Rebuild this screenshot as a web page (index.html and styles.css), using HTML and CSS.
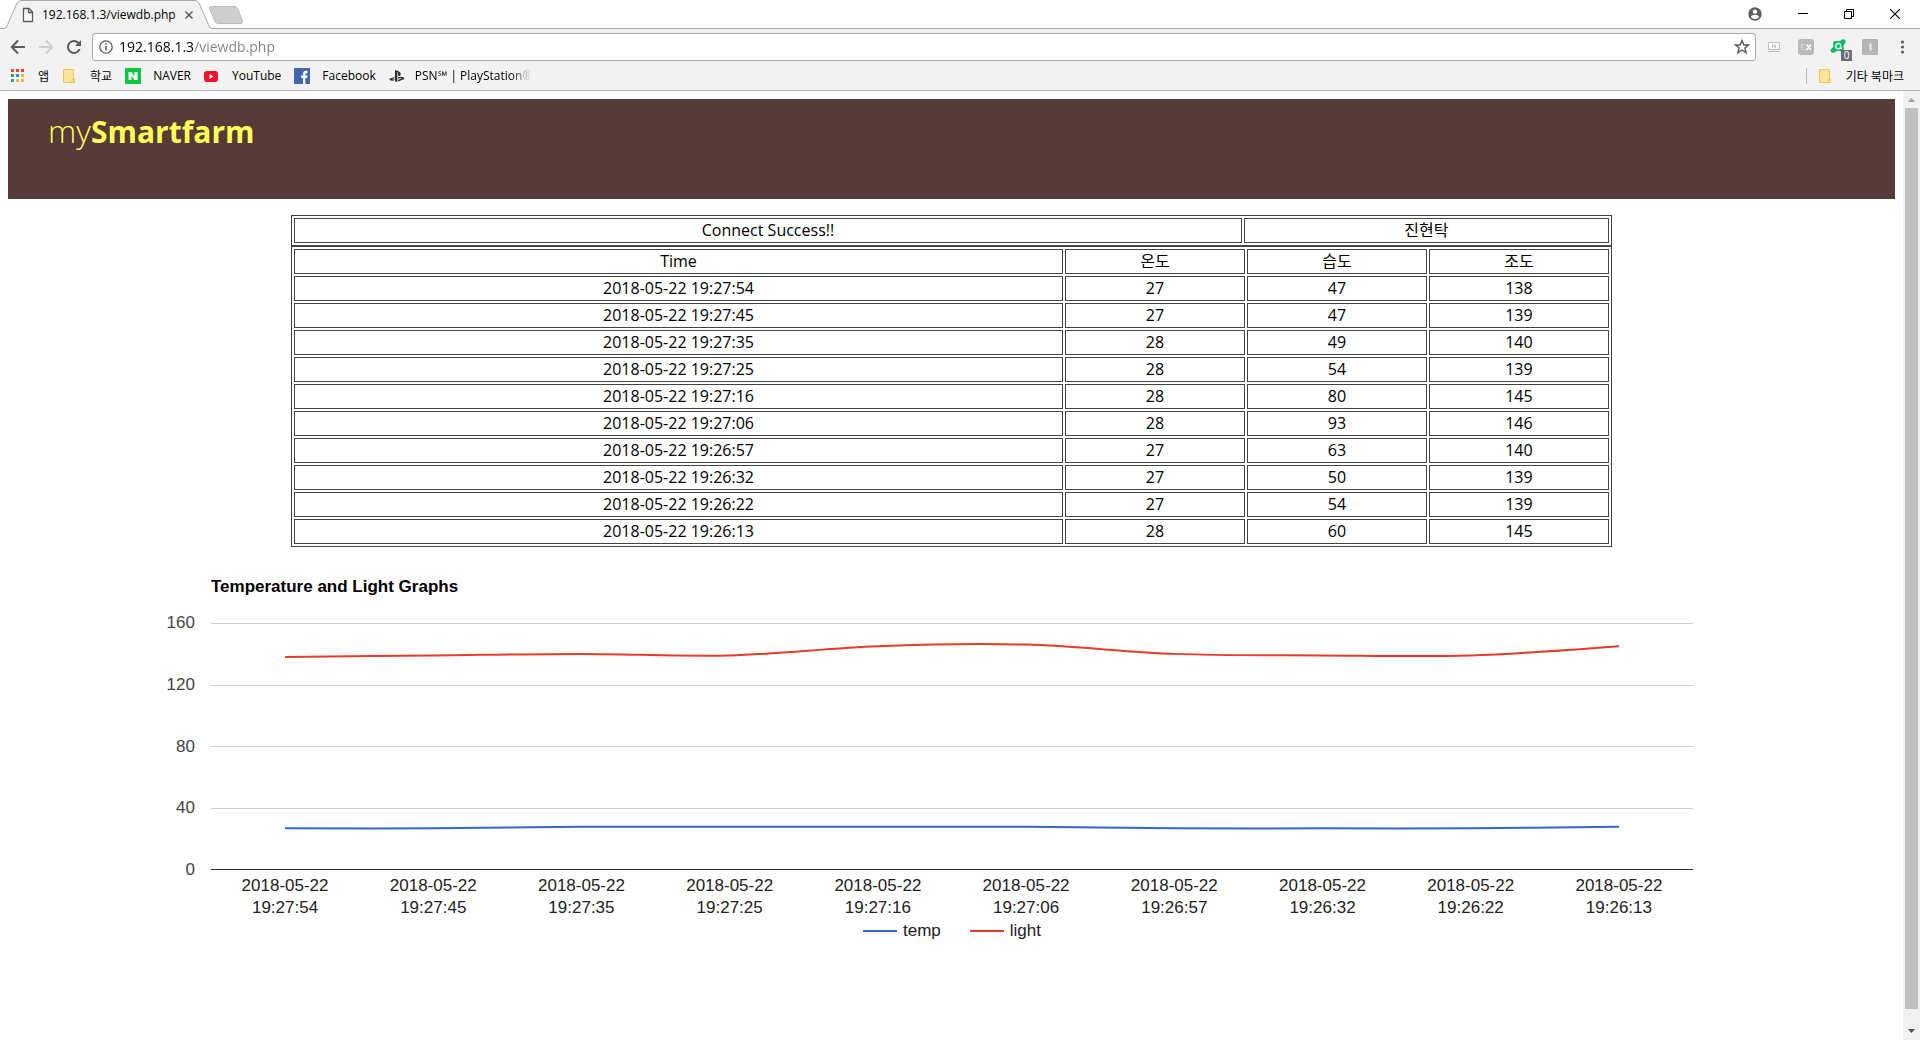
FILE: index.html
```html
<!DOCTYPE html>
<html lang="ko">
<head>
<meta charset="utf-8">
<title>192.168.1.3/viewdb.php</title>
<link rel="stylesheet" href="styles.css">
</head>
<body>
<header class="browser">
  <div class="tabstrip">
    <div class="tab">
      <svg class="tab-shape" width="214" height="29" viewBox="0 0 214 29"><path d="M0 28.500H4Q6 28.500 7 26L17 3Q18.500 .5 21 .5H195Q197.500 .5 199 3L209 26Q210 28.500 212 28.500H214V29H0Z" fill="#f2f2f2"/><path d="M0 28.500H4Q6 28.500 7 26L17 3Q18.500 .5 21 .5H195Q197.500 .5 199 3L209 26Q210 28.500 212 28.500H214" fill="none" stroke="#a9a9a9"/></svg>
      <svg class="tab-page" width="12" height="16" viewBox="0 0 12 16"><path d="M1.500 1.500H7L10.500 5V14.500H1.500ZM6.500 1.500V5.500H10.500" fill="#fff" stroke="#5a5a5a" stroke-width="1.300"/></svg>
      <span class="tab-title">192.168.1.3/viewdb.php</span>
      <button class="tab-close" aria-label="탭 닫기"><svg width="10" height="10" viewBox="0 0 10 10"><path d="M1.500 1.500L8.500 8.500M8.500 1.500L1.500 8.500" stroke="#5a5a5a" stroke-width="1.500"/></svg></button>
    </div>
    <button class="newtab" aria-label="새 탭"><svg width="36" height="20" viewBox="0 0 36 20"><path d="M2.500 1.500H26Q28.500 1.500 29.500 3.500L34.500 16Q35 18.500 33 18.500H10Q8 18.500 7 16.500L1.500 3.500Q1 1.500 2.500 1.500Z" fill="#cdcdcd" stroke="#bcbcbc"/></svg></button>
    <div class="window-buttons">
      <button class="profile" aria-label="프로필"><svg width="14" height="14" viewBox="0 0 14 14"><circle cx="7" cy="7" r="6.700" fill="#5f5f5f"/><circle cx="7" cy="4.600" r="2.200" fill="#fff"/><path d="M2.700 9.800Q4 7.800 7 7.800T11.300 9.800Q9.600 12 7 12T2.700 9.800Z" fill="#fff"/></svg></button>
      <button aria-label="최소화"><svg width="10" height="10" viewBox="0 0 10 10"><path d="M0 4.500H10" stroke="#000"/></svg></button>
      <button aria-label="이전 크기로"><svg width="10" height="10" viewBox="0 0 10 10"><path d="M.5 2.500H7.500V9.500H.5ZM2.500 2V.5H9.500V7.500H8" fill="none" stroke="#000"/></svg></button>
      <button aria-label="닫기"><svg width="10" height="10" viewBox="0 0 10 10"><path d="M0 0L10 10M10 0L0 10" stroke="#000" stroke-width="1.100"/></svg></button>
    </div>
  </div>
  <div class="toolbar">
    <nav class="navigation">
      <button aria-label="뒤로"><svg width="16" height="16" viewBox="0 0 16 16"><path d="M15 8H2.500M8 1.500L1.800 8L8 14.500" fill="none" stroke="#5a5a5a" stroke-width="2"/></svg></button>
      <button aria-label="앞으로" disabled><svg width="16" height="16" viewBox="0 0 16 16"><path d="M1 8H13.500M8 1.500L14.200 8L8 14.500" fill="none" stroke="#cfcfcf" stroke-width="2"/></svg></button>
      <button aria-label="새로고침"><svg width="16" height="16" viewBox="0 0 16 16"><path d="M13.600 10A6 6 0 1 1 12.500 4" fill="none" stroke="#5a5a5a" stroke-width="2"/><path d="M15 1V7H9Z" fill="#5a5a5a"/></svg></button>
    </nav>
    <div class="omnibox">
      <svg width="14" height="14" viewBox="0 0 14 14"><circle cx="7" cy="7" r="6.200" fill="none" stroke="#5a5a5a" stroke-width="1.300"/><path d="M7 6V10.500M7 3.200V4.800" stroke="#5a5a5a" stroke-width="1.600"/></svg>
      <input class="address" type="text" aria-label="주소" value="192.168.1.3/viewdb.php">
      <button aria-label="북마크에 추가"><svg width="16" height="16" viewBox="0 0 16 16"><path d="M8 1.600L9.900 6H14.600L10.900 9L12.200 13.900L8 11L3.800 13.900L5.100 9L1.400 6H6.100Z" fill="none" stroke="#5a5a5a" stroke-width="1.400"/></svg></button>
    </div>
    <div class="extensions">
      <button aria-label="확장 프로그램"><svg width="16" height="16" viewBox="0 0 16 16"><path d="M2.500 3.500H13.500V10.500H2.500Z" fill="#f7f7f7" stroke="#c0c0c0"/><path d="M2 12.500H14M6.500 8.500V5.500L9.500 8.500V5.500" fill="none" stroke="#bcbcbc"/></svg></button>
      <button aria-label="EX"><svg width="16" height="16" viewBox="0 0 16 16"><rect width="16" height="16" rx="3" fill="#b9b9b9"/><path d="M3 5.500H7M3 8H6.500M3 10.500H7M3.500 5V11" stroke="#d6d6d6"/><path d="M8.500 5.500L13 11M13 5.500L8.500 11" stroke="#fff" stroke-width="1.600"/></svg></button>
      <button class="avast" aria-label="Avast"><svg width="16" height="16" viewBox="0 0 16 16"><path d="M3 3Q5 1.500 8 2Q10 2.500 12 .5Q15-.5 15.500 2Q16 4 14 5.500Q13 8 14 10Q14 13 11 12.500Q8 11 6 12.500Q3 15 1 13Q-.5 10.500 2.500 9Q4 7 3 3Z" fill="#0dbb62"/><path d="M10.300 5.300A2.700 2.700 0 1 0 10.300 9M10.500 4.700V8.500Q10.700 9.700 12 9" fill="none" stroke="#fff" stroke-width="1.300"/></svg><span class="badge">0</span></button>
      <button aria-label="확장 프로그램 I"><svg width="16" height="16" viewBox="0 0 16 16"><rect width="16" height="16" rx="1" fill="#b5b5b5"/><path d="M8.500 4.500V11.500" stroke="#eee" stroke-width="2"/></svg></button>
      <button aria-label="메뉴"><svg width="16" height="16" viewBox="0 0 16 16"><g fill="#5a5a5a"><circle cx="8.500" cy="3" r="1.600"/><circle cx="8.500" cy="8" r="1.600"/><circle cx="8.500" cy="13" r="1.600"/></g></svg></button>
    </div>
  </div>
  <nav class="bookmarks">
    <a href="#apps"><svg width="16" height="16" viewBox="0 0 16 16"><path d="M1 1h3v3H1zM6 1h3v3H6zM11 1h3v3h-3z" fill="#ea4335"/><path d="M1 6h3v3H1zM1 11h3v3H1z" fill="#34a853"/><path d="M6 6h3v3H6z" fill="#2a8bf2"/><path d="M11 6h3v3h-3zM6 11h3v3H6zM11 11h3v3h-3z" fill="#f9b234"/></svg>앱</a>
    <a href="#school"><svg width="16" height="16" viewBox="0 0 16 16"><path d="M1.500 1.500H11.500V10.500H12.500V14.500H1.500Z" fill="#ffe49b" stroke="#f0c45c"/><path d="M10 14V11.500H12" fill="none" stroke="#f0c45c"/></svg>학교</a>
    <a href="#naver"><svg width="16" height="16" viewBox="0 0 16 16"><rect width="16" height="16" rx="1" fill="#06c93c"/><path d="M3.500 4H6.500L9.500 8.200V4H12.500V12H9.500L6.500 7.800V12H3.500Z" fill="#fff"/></svg>NAVER</a>
    <a href="#youtube"><svg width="16" height="16" viewBox="0 0 16 16"><rect x="0" y="3" width="14" height="11" rx="3" fill="#f11228"/><path d="M5.500 6V11L9.500 8.500Z" fill="#fff"/></svg>YouTube</a>
    <a href="#facebook"><svg width="16" height="16" viewBox="0 0 16 16"><rect width="16" height="16" fill="#4267b2"/><path d="M9 16V10H7V7.500H9V6Q9 2.800 12 2.800H13.500V5.200H12.500Q11.300 5.200 11.300 6.300V7.500H13.500L13.200 10H11.300V16Z" fill="#fff"/></svg>Facebook</a>
    <a class="fade" href="#psn"><svg width="16" height="16" viewBox="0 0 16 16"><path d="M6 2L9 2.900Q12 4 11.700 6.600Q11.300 8.600 9 7.600V4.500L8.300 4V14L6 13.300Z" fill="#2e2a2b"/><path d="M5.400 9L1 10.600Q-.5 12 2 12.600Q3.700 13 5.400 12.300V11L3.500 11.500L3 11L5.400 10.200ZM9 9.200Q12.500 8.300 15 9.700Q16 10.800 14 11.600L9 13.400V11.900L12.700 10.600L12 10.100L9 10.800Z" fill="#2e2a2b"/></svg>PSN℠ | PlayStation®</a>
    <a class="others" href="#others"><svg width="16" height="16" viewBox="0 0 16 16"><path d="M1.500 1.500H11.500V10.500H12.500V14.500H1.500Z" fill="#ffe49b" stroke="#f0c45c"/><path d="M10 14V11.500H12" fill="none" stroke="#f0c45c"/></svg>기타 북마크</a>
  </nav>
</header>
<div class="viewport">
  <main class="page">
    <header class="banner"><h1>my<strong>Smartfarm</strong></h1></header>
    <table class="status">
      <colgroup><col class="col-message"><col></colgroup>
      <tr><td>Connect Success!!</td><td>진현탁</td></tr>
    </table>
    <table class="readings">
      <colgroup><col><col class="col-value"><col class="col-value"><col class="col-value"></colgroup>
      <tr><th>Time</th><th>온도</th><th>습도</th><th>조도</th></tr>
      <tr><td>2018-05-22 19:27:54</td><td>27</td><td>47</td><td>138</td></tr>
      <tr><td>2018-05-22 19:27:45</td><td>27</td><td>47</td><td>139</td></tr>
      <tr><td>2018-05-22 19:27:35</td><td>28</td><td>49</td><td>140</td></tr>
      <tr><td>2018-05-22 19:27:25</td><td>28</td><td>54</td><td>139</td></tr>
      <tr><td>2018-05-22 19:27:16</td><td>28</td><td>80</td><td>145</td></tr>
      <tr><td>2018-05-22 19:27:06</td><td>28</td><td>93</td><td>146</td></tr>
      <tr><td>2018-05-22 19:26:57</td><td>27</td><td>63</td><td>140</td></tr>
      <tr><td>2018-05-22 19:26:32</td><td>27</td><td>50</td><td>139</td></tr>
      <tr><td>2018-05-22 19:26:22</td><td>27</td><td>54</td><td>139</td></tr>
      <tr><td>2018-05-22 19:26:13</td><td>28</td><td>60</td><td>145</td></tr>
    </table>
    <section class="chart">
      <h2>Temperature and Light Graphs</h2>
      <div class="y-axis"><span>160</span><span>120</span><span>80</span><span>40</span><span>0</span></div>
      <div class="plot">
        <i></i><i></i><i></i><i></i><i class="baseline"></i>
        <svg class="series" viewBox="0 0 1000 160" preserveAspectRatio="none">
          <path class="temp" d="M50 133C50 133 117 133.170 150 133S217 132.170 250 132S317 132 350 132S417 132 450 132S517 131.830 550 132S617 132.830 650 133S717 133 750 133S817 133.170 850 133S950 132 950 132"/>
          <path class="light" d="M50 22C50 22 117 21.330 150 21S217 20 250 20S317 21.830 350 21S417 16.170 450 15S517 13.170 550 14S617 18.830 650 20S717 20.830 750 21S817 22 850 21S950 15 950 15"/>
        </svg>
      </div>
      <div class="x-axis">
        <span>2018-05-22<br>19:27:54</span><span>2018-05-22<br>19:27:45</span><span>2018-05-22<br>19:27:35</span><span>2018-05-22<br>19:27:25</span><span>2018-05-22<br>19:27:16</span><span>2018-05-22<br>19:27:06</span><span>2018-05-22<br>19:26:57</span><span>2018-05-22<br>19:26:32</span><span>2018-05-22<br>19:26:22</span><span>2018-05-22<br>19:26:13</span>
      </div>
      <div class="legend"><span class="key key-temp">temp</span><span class="key key-light">light</span></div>
    </section>
  </main>
  <div class="scrollbar">
    <svg width="17" height="17" viewBox="0 0 17 17"><path d="M5 11H12L8.500 7Z" fill="#a3a3a3"/></svg>
    <div class="track"><div class="thumb"></div></div>
    <svg width="17" height="17" viewBox="0 0 17 17"><path d="M5 6H12L8.500 10Z" fill="#505050"/></svg>
  </div>
</div>
</body>
</html>
```
FILE: styles.css
```css
* { box-sizing: border-box; }
body {
  margin: 0;
  min-height: 100vh;
  display: flex;
  flex-direction: column;
  background: #fff;
  color: #000;
  font-family: "Open Sans", "Noto Sans CJK KR", sans-serif;
}
button {
  display: flex;
  align-items: center;
  justify-content: center;
  padding: 0;
  border: 0;
  background: none;
  font: inherit;
}
svg { display: block; flex: none; }

/* browser window frame */
.browser { font-size: 12px; border-bottom: 1px solid #b3b3b3; background: #f2f2f2; }
.tabstrip {
  display: flex;
  height: 29px;
  background: #fff linear-gradient(#a9a9a9, #a9a9a9) bottom / 100% 1px no-repeat;
}
.tab {
  position: relative;
  display: flex;
  align-items: center;
  width: 208px;
  padding: 0 14px 0 22px;
}
.tab-shape { position: absolute; left: 0; top: 0; }
.tab-page, .tab-title, .tab-close { position: relative; }
.tab-title { flex: 1; margin-left: 8px; white-space: nowrap; }
.newtab { height: 29px; }
.window-buttons { display: flex; margin-left: auto; padding-right: 2px; }
.window-buttons button { width: 46px; height: 27px; }
.window-buttons .profile { width: 50px; }

.toolbar { display: flex; align-items: center; height: 36px; padding: 0 10px 0 4px; }
.navigation { display: flex; margin-right: 4px; }
.navigation button { width: 28px; height: 28px; }
.omnibox {
  flex: 1;
  display: flex;
  align-items: center;
  height: 28px;
  padding: 0 5px 0 6px;
  border: 1px solid #a9a9a9;
  border-radius: 3px;
  background: #fff;
}
.address {
  flex: 1;
  min-width: 0;
  height: 24px;
  margin-left: 6px;
  padding: 0;
  border: 0;
  outline: 0;
  font: 14px/24px "Open Sans", sans-serif;
  color: transparent;
  background: linear-gradient(90deg, #000 75px, #808080 75px);
  -webkit-background-clip: text;
  background-clip: text;
}
.extensions { display: flex; gap: 16px; margin-left: 10px; }
.extensions button { width: 16px; height: 16px; }
.avast { position: relative; }
.badge {
  position: absolute;
  left: 11px;
  top: 11px;
  width: 11px;
  height: 11px;
  background: #6c6c7c;
  color: #fff;
  font-size: 10px;
  line-height: 11px;
}
.bookmarks { display: flex; align-items: center; gap: 13px; height: 25px; padding: 0 16px 4px 10px; }
.bookmarks a {
  display: flex;
  align-items: center;
  gap: 12px;
  height: 16px;
  color: #000;
  text-decoration: none;
  white-space: nowrap;
}
.bookmarks .fade {
  gap: 10px;
  -webkit-mask-image: linear-gradient(90deg, #000 85%, transparent);
  mask-image: linear-gradient(90deg, #000 85%, transparent);
}
.bookmarks .others { margin-left: auto; padding-left: 11px; border-left: 1px solid #bdbdbd; }

/* page */
.viewport { flex: 1; display: flex; }
.page { flex: 1; min-width: 0; padding: 8px; }
.banner { height: 100px; padding: 10px 40px; background: #563939; color: #ffff55; }
.banner h1 { margin: 0; font-size: 32px; line-height: 44px; font-weight: 300; }
.banner strong { font-size: 30px; font-weight: 700; }

table {
  width: 70%;
  margin: 0 auto;
  table-layout: fixed;
  border: 1px solid #444;
  border-spacing: 2px;
  font-size: 16px;
  line-height: 21px;
  text-align: center;
}
td, th { height: 25px; padding: 1px; border: 1px solid #444; font-weight: 400; }
.status { margin-top: 16px; }
.col-message { width: 72.2%; }
.col-value { width: 13.75%; }

/* line chart */
.chart {
  display: grid;
  grid-template-columns: 36px minmax(0, 1fr);
  column-gap: 16px;
  width: 84%;
  margin: 29px auto 0;
  padding-right: 51px;
  font: 17px/22px "Liberation Sans", Arial, sans-serif;
  color: #222;
}
.chart h2 { grid-column: 2; margin: 0 0 25px; font-size: 17px; line-height: 22px; color: #000; }
.y-axis, .plot { display: flex; flex-direction: column; justify-content: space-between; }
.y-axis { margin: -11px 0; text-align: right; color: #444; }
.plot { position: relative; height: 247px; }
.plot i { height: 1px; background: #ccc; }
.plot .baseline { background: #333; }
.series { position: absolute; left: 0; top: 0; width: 100%; height: 100%; }
.series path { fill: none; stroke-width: 2px; vector-effect: non-scaling-stroke; }
.series .temp { stroke: #3366cc; }
.series .light { stroke: #e53b29; }
.x-axis { grid-column: 2; display: grid; grid-template-columns: repeat(10, 1fr); margin-top: 5px; text-align: center; }
.legend { grid-column: 2; display: flex; justify-content: center; gap: 29px; margin-top: 1px; }
.key { display: flex; align-items: center; gap: 6px; }
.key::before { content: ""; width: 34px; height: 2px; background: #3366cc; }
.key-light::before { background: #e53b29; }

/* page scroll bar */
.scrollbar { display: flex; flex-direction: column; width: 17px; background: #f1f1f1; }
.track { flex: 1; padding: 0 2px; }
.thumb { height: calc(100vh - 139px); background: #c1c1c1; }
```
